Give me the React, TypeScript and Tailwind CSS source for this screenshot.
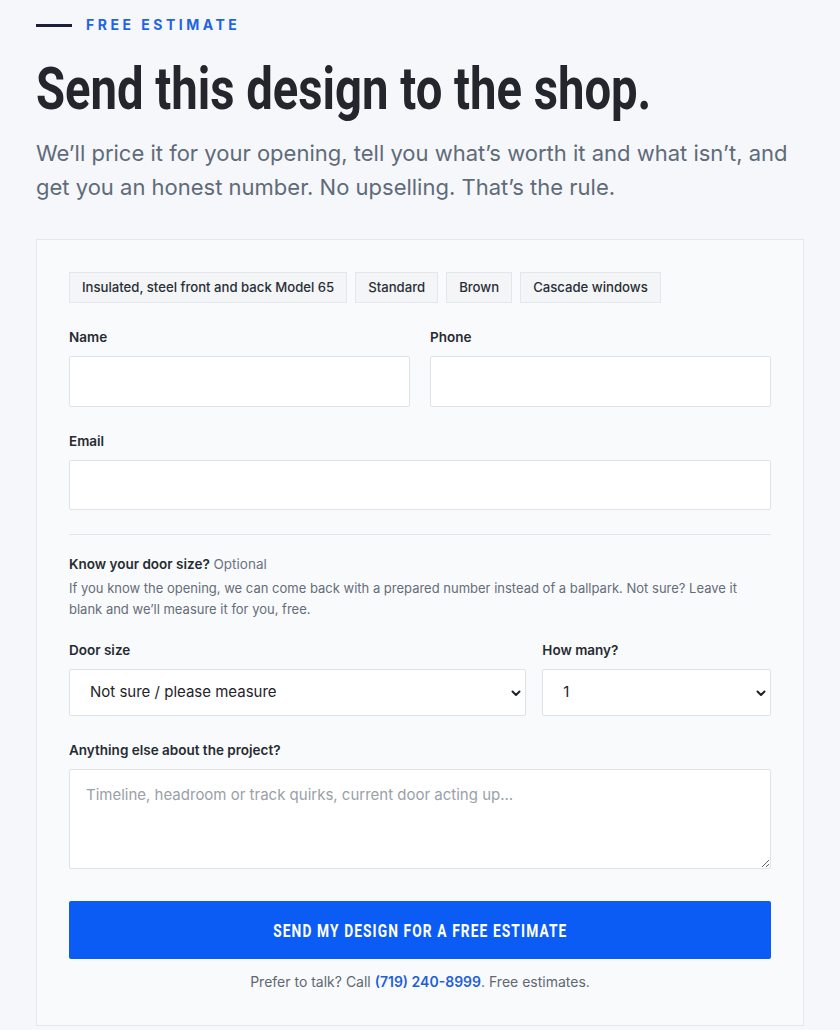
import React from "react";

const cond = { fontFamily: 'Roboto, "Noto Sans", sans-serif' };

function Chip({ children }: { children: React.ReactNode }) {
  return (
    <span className="inline-flex h-[31px] items-center border border-[#e3e6ea] bg-[#f3f5f7] px-[12px] text-[13.15px] font-medium text-[#2a2f36]">
      {children}
    </span>
  );
}

function Label({ children }: { children: React.ReactNode }) {
  return <div className="mb-[9px] text-[13.5px] font-semibold leading-[20px] text-[#262b31]">{children}</div>;
}

function Chevron() {
  return (
    <svg className="pointer-events-none absolute right-[3px] top-1/2 -translate-y-1/2" width="12" height="12" viewBox="0 0 12 12">
      <path d="M2.5 4.5 L6 8 L9.5 4.5" fill="none" stroke="#1f2328" strokeWidth="2" strokeLinecap="round" strokeLinejoin="round" />
    </svg>
  );
}

export default function App() {
  return (
    <div className="min-h-[1030px] bg-[#f5f7fa] px-[36px] pt-[15px]" style={{ fontFamily: 'Inter, "Noto Sans", sans-serif' }}>
      <div className="flex items-center gap-[14px]">
        <span className="block h-[3px] w-[36px] bg-[#1b1f3b]" />
        <span className="text-[14px] font-bold leading-[20px] tracking-[0.25em] text-[#1f63e6]">FREE ESTIMATE</span>
      </div>
      <h1 className="mt-[22px] whitespace-nowrap text-[60px] font-bold leading-[64px] text-[#23272d]" style={cond}>
        <span className="inline-block origin-left scale-x-[0.787]">Send this design to the shop.</span>
      </h1>
      <p className="mt-[15px] max-w-[762px] text-[22px] leading-[34px] text-[#5f6b79]">
        We’ll price it for your opening, tell you what’s worth it and what isn’t, and get you an honest number. No upselling. That’s the rule.
      </p>

      <div className="mt-[35px] w-[768px] border border-[#e4e7eb] bg-[#f9fafc] px-[32px] pb-[33px] pt-[32px]">
        <div className="flex flex-wrap gap-[8px]">
          <Chip>Insulated, steel front and back Model 65</Chip>
          <Chip>Standard</Chip>
          <Chip>Brown</Chip>
          <Chip>Cascade windows</Chip>
        </div>

        <div className="mt-[24px] grid grid-cols-2 gap-x-[20px]">
          <div>
            <Label>Name</Label>
            <input className="block h-[51px] w-full rounded-[2px] border border-[#dfe2e6] bg-white" />
          </div>
          <div>
            <Label>Phone</Label>
            <input className="block h-[51px] w-full rounded-[2px] border border-[#dfe2e6] bg-white" />
          </div>
        </div>

        <div className="mt-[24px]">
          <Label>Email</Label>
          <input className="block h-[50px] w-full rounded-[2px] border border-[#dfe2e6] bg-white" />
        </div>

        <div className="mt-[24px] h-px bg-[#e2e5e9]" />

        <div className="mt-[19px] text-[13.5px] leading-[20px]">
          <span className="font-semibold text-[#262b31]">Know your door size?</span>{" "}
          <span className="text-[#6b7480]">Optional</span>
        </div>
        <p className="mt-[4px] text-[13px] leading-[21px] text-[#646d78]">
          If you know the opening, we can come back with a prepared number instead of a ballpark. Not sure? Leave it blank and we’ll measure it for you, free.
        </p>

        <div className="mt-[20px] grid grid-cols-[2fr_1fr] gap-x-[16px]">
          <div>
            <Label>Door size</Label>
            <div className="relative flex h-[47px] items-center rounded-[2px] border border-[#dfe2e6] bg-white pl-[20px] text-[15px] text-[#1f2328]">
              Not sure / please measure
              <Chevron />
            </div>
          </div>
          <div>
            <Label>How many?</Label>
            <div className="relative flex h-[47px] items-center rounded-[2px] border border-[#dfe2e6] bg-white pl-[20px] text-[15px] text-[#1f2328]">
              1
              <Chevron />
            </div>
          </div>
        </div>

        <div className="mt-[24px]">
          <Label>Anything else about the project?</Label>
          <textarea
            className="block h-[100px] w-full rounded-[2px] border border-[#dfe2e6] bg-white px-[16px] py-[13px] text-[15px] leading-[24px] placeholder:text-[#9aa0a8]"
            placeholder="Timeline, headroom or track quirks, current door acting up..."
          />
        </div>

        <button
          className="mt-[32px] flex h-[58px] w-full items-center justify-center rounded-[2px] bg-[#0b5cf5] text-[18px] font-bold text-white"
          style={cond}
        >
          <span className="inline-block scale-x-[0.765] whitespace-nowrap tracking-[0.08em]">SEND MY DESIGN FOR A FREE ESTIMATE</span>
        </button>

        <p className="mt-[13px] text-center text-[14px] leading-[20px] text-[#5f6872]">
          Prefer to talk? Call <span className="font-semibold text-[#1f5fd8]">(719) 240-8999</span>. Free estimates.
        </p>
      </div>
    </div>
  );
}
